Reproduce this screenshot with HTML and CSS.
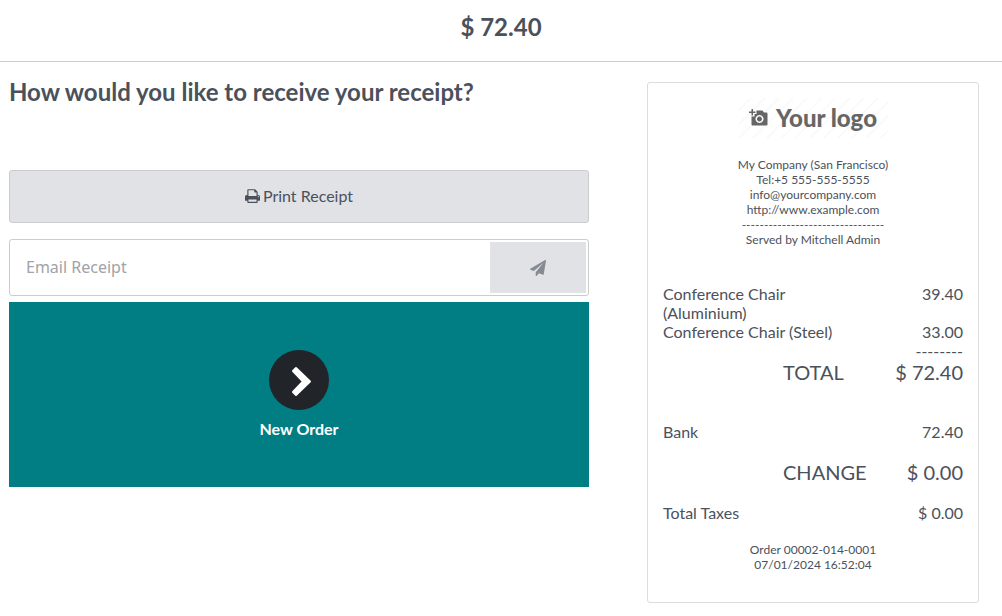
FILE: index.html
```
<!DOCTYPE html>
<html lang="en">
<head>
<meta charset="utf-8">
<meta name="viewport" content="width=device-width, initial-scale=1">
<title>Receipt</title>
<link rel="stylesheet" href="styles.css">
</head>
<body>
<header class="top">
  <h1 class="amount">$ 72.40</h1>
</header>
<main class="content">
  <section class="actions">
    <h2 class="question">How would you like to receive your receipt?</h2>
    <button class="print" type="button">
      <svg class="print-icon" viewBox="0 0 1664 1664" aria-hidden="true"><path fill="currentColor" d="M384 1536h896v-256h-896v256zM384 896h896v-384h-160q-40 0-68-28t-28-68v-160h-640v640zM1536 960q0-26-19-45t-45-19-45 19-19 45 19 45 45 19 45-19 19-45zM1664 960v416q0 13-9.500 22.500t-22.500 9.500h-224v160q0 40-28 68t-68 28h-960q-40 0-68-28t-28-68v-160h-224q-13 0-22.500-9.500t-9.500-22.500v-416q0-79 56.500-135.500t135.500-56.500h64v-544q0-40 28-68t68-28h672q40 0 88 20t76 48l152 152q28 28 48 76t20 88v256h64q79 0 135.500 56.500t56.500 135.500z"/></svg>
      <span>Print Receipt</span>
    </button>
    <form class="email">
      <input class="email-input" type="email" placeholder="Email Receipt" aria-label="Email Receipt">
      <button class="send" type="button" aria-label="Send">
        <svg class="send-icon" viewBox="0 0 1792 1792" aria-hidden="true"><path fill="currentColor" d="M1764 11q33 24 27 64l-256 1536q-5 29-32 45-14 8-31 8-11 0-24-5l-453-185-242 295q-18 23-49 23-13 0-22-4-19-7-30.500-23.500t-11.500-36.500v-349l864-1059-1069 925-395-162q-37-14-40-55-2-40 32-59l1664-960q15-9 32-9 20 0 36 11z"/></svg>
      </button>
    </form>
    <button class="next" type="button">
      <svg class="next-icon" viewBox="0 0 60 60" aria-hidden="true"><circle cx="30" cy="30" r="30" fill="#212529"/><path d="M27 18L41 31.500L27 45L24 42L34 31.500L24 21Z" fill="#fff" stroke="#fff" stroke-width="2" stroke-linejoin="round"/></svg>
      <span>New Order</span>
    </button>
  </section>
  <article class="receipt">
    <div class="logo">
      <svg class="camera" viewBox="0 0 19 17" aria-hidden="true"><path fill="#666" fill-rule="evenodd" d="M2.500 0h1.500v2.500h2.500v1.500h-2.500v2.500h-1.500v-2.500h-2.500v-1.500h2.500zM7.500 1.500h6l1.500 2h2.500q1 0 1 1v11q0 1-1 1h-14q-1 0-1-1v-8h3v-2.500h2zM10.500 6a4 4 0 1 0 .01 0zM10.500 7.500a2.500 2.500 0 1 1-.01 0z"/></svg>
      <span>Your logo</span>
    </div>
    <div class="contact">
      <div>My Company (San Francisco)</div>
      <div>Tel:+5 555-555-5555</div>
      <div>info@yourcompany.com</div>
      <div>http://www.example.com</div>
      <div>--------------------------------</div>
      <div>Served by Mitchell Admin</div>
    </div>
    <div class="lines">
      <div class="row"><span class="product">Conference Chair (Aluminium)</span><span>39.40</span></div>
      <div class="row"><span class="product">Conference Chair (Steel)</span><span>33.00</span></div>
      <div class="rule">--------</div>
    </div>
    <div class="row big total"><span>TOTAL</span><span>$ 72.40</span></div>
    <div class="row payment"><span>Bank</span><span>72.40</span></div>
    <div class="row big change"><span>CHANGE</span><span>$ 0.00</span></div>
    <div class="row taxes"><span>Total Taxes</span><span>$ 0.00</span></div>
    <div class="order">
      <div>Order 00002-014-0001</div>
      <div>07/01/2024 16:52:04</div>
    </div>
  </article>
</main>
</body>
</html>
```
FILE: styles.css
```
* {
  box-sizing: border-box;
}

body {
  margin: 0;
  background: #fff;
  color: #4b515b;
  font-family: Lato, "Liberation Sans", sans-serif;
  font-size: 16px;
}

.top {
  padding: 12px 0 20px;
  border-bottom: 1px solid #ccc;
  text-align: center;
}

.amount,
.question {
  margin: 0;
  font-size: 24px;
  line-height: 29px;
  font-weight: 700;
}

.content {
  display: flex;
  align-items: flex-start;
  gap: 58px;
  padding: 15px 23px 12px 9px;
}

.actions {
  flex: 1;
  min-width: 0;
}

.question {
  margin-bottom: 64px;
}

.print {
  display: flex;
  align-items: center;
  justify-content: center;
  gap: 3px;
  width: 100%;
  height: 53px;
  padding: 0 0 2px;
  border: 1px solid #ccc;
  border-radius: 3px;
  background: #e0e2e6;
  color: inherit;
  font: inherit;
}

.print-icon {
  width: 15px;
  height: 15px;
}

.email {
  display: flex;
  margin: 16px 0 6px;
  padding: 2px;
  height: 57px;
  border: 1px solid #ccc;
  border-radius: 3px;
}

.email-input {
  flex: 1;
  min-width: 0;
  padding: 0 14px 2px;
  border: 0;
  background: transparent;
  color: inherit;
  font-family: "Noto Sans", sans-serif;
  font-size: 16px;
}

.email-input::placeholder {
  color: #a0a3a8;
}

.send {
  width: 96px;
  padding: 0;
  border: 0;
  background: #e0e2e6;
  color: #868a92;
}

.send-icon {
  display: block;
  width: 16px;
  height: 16px;
  margin: 0 auto;
}

.next {
  display: flex;
  flex-direction: column;
  align-items: center;
  justify-content: center;
  gap: 9px;
  width: 100%;
  height: 185px;
  padding: 0 0 2px;
  border: 0;
  background: #017e84;
  color: #fff;
  font: inherit;
  font-weight: 700;
}

.next-icon {
  width: 60px;
  height: 60px;
}

.receipt {
  flex: 0 0 332px;
  margin-top: 5px;
  padding: 15px 15px 30px;
  border: 1px solid #dcdcdc;
  border-radius: 3px;
  line-height: 19px;
}

.logo {
  display: flex;
  align-items: center;
  justify-content: center;
  gap: 8px;
  width: 150px;
  height: 40px;
  margin: 0 auto 19px;
  padding-bottom: 2px;
  background: repeating-linear-gradient(135deg, #fff 0 8px, #fafafa 8px 10px);
  color: #666;
  font-size: 24px;
  font-weight: 900;
}

.camera {
  width: 19px;
  height: 17px;
}

.contact,
.order {
  font-size: 12px;
  line-height: 15px;
  text-align: center;
}

.lines {
  margin-top: 37px;
}

.row {
  display: flex;
  justify-content: space-between;
}

.product {
  width: 180px;
}

.rule {
  text-align: right;
}

.big {
  padding-left: 120px;
  font-size: 20px;
  line-height: 24px;
}

.payment {
  margin: 38px 0 19px;
}

.taxes {
  margin: 19px 0 20px;
}
```
